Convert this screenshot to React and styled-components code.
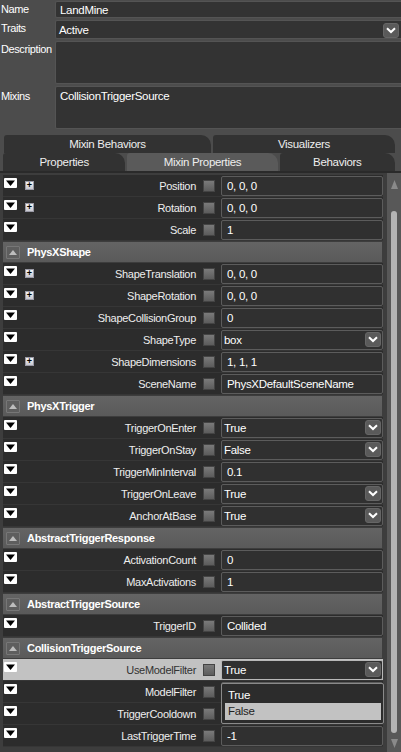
import React from "react";
import styled, { createGlobalStyle } from "styled-components";

const Global = createGlobalStyle`
  html, body {
    margin: 0;
    padding: 0;
    background: #3a3a3a;
  }
  * {
    box-sizing: border-box;
  }
`;

const Screen = styled.div`
  width: 401px;
  height: 752px;
  overflow: hidden;
  background: #4c4c4c;
  font-family: "Liberation Sans", Arial, sans-serif;
  font-size: 11px;
  letter-spacing: -0.3px;
  color: #fff;
  display: flex;
  flex-direction: column;
`;

const Form = styled.div`
  display: grid;
  grid-template-columns: 55px 1fr;
  row-gap: 2px;
  padding-top: 1px;
`;

const FieldLabel = styled.div`
  padding: ${({ pt }) => pt || 2}px 0 0 1px;
  line-height: 13px;
  font-size: 11px;
  letter-spacing: -0.4px;
  white-space: nowrap;
`;

const Field = styled.div`
  height: ${({ h }) => h}px;
  background: #333;
  border: 1px solid #545454;
  border-right: none;
  border-radius: 2px 0 0 2px;
  padding: ${({ pt }) => pt || 3}px 0 0 ${({ pl }) => pl || 4}px;
  display: flex;
  align-items: flex-start;
  justify-content: space-between;
  font-size: 11.5px;
`;

const DropBtn = styled.div`
  width: 16px;
  height: 15px;
  border-radius: 3px;
  background: #5a5a5a;
  border: 1px solid #666;
  display: flex;
  align-items: center;
  justify-content: center;
  margin: ${({ m }) => m || "-1px 2px 0 0"};
  flex: none;
`;

const Tabs = styled.div`
  padding: 6px 4px 0 3px;
  height: 44px;
  border-bottom: 2px solid #2a2a2a;
  display: flex;
  flex-direction: column;
`;

const TabRow = styled.div`
  display: flex;
  height: 18px;
  padding-left: ${({ pl }) => pl || 0}px;
`;

const Tab = styled.div`
  width: ${({ w }) => w}px;
  height: 18px;
  margin-right: 2px;
  background: ${({ active }) => (active ? "#5a5a5a" : "#323232")};
  border-top-right-radius: 10px;
  border-top-left-radius: 3px;
  display: flex;
  align-items: center;
  justify-content: center;
  font-size: 11.5px;
  color: #eee;
`;

const Body = styled.div`
  flex: 1;
  display: flex;
  background: #3d3d3d;
  min-height: 0;
`;

const List = styled.div`
  position: relative;
  flex: 1;
  padding: 2px 0 0 3px;
  width: 386px;
`;

const Row = styled.div`
  height: 22px;
  width: 380px;
  display: flex;
  align-items: center;
  background: ${({ active }) => (active ? "#c2c2c2" : "#2c2c2c")};
  border-bottom: 1px solid #363636;
  color: ${({ active }) => (active ? "#333" : "#eee")};
`;

const Expand = styled.div`
  width: 20px;
  height: 100%;
  padding: 3px 0 0 1px;
  flex: none;
`;

const PlusSlot = styled.div`
  width: 12px;
  flex: none;
  padding: 6px 0 0 2px;
  height: 100%;
`;

const Plus = styled.div`
  width: 9px;
  height: 9px;
  background: linear-gradient(#f4f4f4, #c8c8d0);
  border: 1px solid #9a9aa6;
  color: #000;
  font: bold 9px/7px "Liberation Sans", Arial, sans-serif;
  text-align: center;
  letter-spacing: 0;
`;

const Label = styled.div`
  flex: 1;
  text-align: right;
  white-space: nowrap;
`;

const Check = styled.div`
  width: 12px;
  height: 12px;
  margin-left: 7px;
  flex: none;
  background: linear-gradient(#7a7a7a, #5c5c5c);
  border: 1px solid #444;
`;

const Input = styled.div`
  width: 162px;
  height: 20px;
  margin-left: 6px;
  flex: none;
  background: #303030;
  border: 1px solid ${({ active }) => (active ? "#b8b8b8" : "#5c5c5c")};
  border-radius: 2px;
  color: #fff;
  display: flex;
  align-items: center;
  justify-content: space-between;
  padding-left: ${({ select }) => (select ? 2 : 5)}px;
  font-size: 11.5px;
`;

const Header = styled.div`
  height: 20px;
  width: 379px;
  margin: 1px 0 1px;
  background: linear-gradient(#646464, #5a5a5a);
  display: flex;
  align-items: center;
  padding-left: 3px;
  font-weight: bold;
  color: #fff;
`;

const Collapse = styled.div`
  width: 14px;
  height: 13px;
  margin-right: 7px;
  background: #5e5e5e;
  border: 1px solid #777;
  border-radius: 1px;
  display: flex;
  align-items: center;
  justify-content: center;
`;

const Popup = styled.div`
  position: absolute;
  left: 221px;
  top: 510px;
  width: 163px;
  height: 41px;
  background: #2c2c2c;
  border: 1px solid #8a8a8a;
  border-radius: 2px;
  padding: 4px 2px 0 3px;
  font-size: 11.5px;
`;

const Option = styled.div`
  height: ${({ hi }) => (hi ? 17 : 15)}px;
  line-height: ${({ hi }) => (hi ? 17 : 15)}px;
  padding-left: 3px;
  background: ${({ hi }) => (hi ? "#c2c2c2" : "transparent")};
  color: ${({ hi }) => (hi ? "#222" : "#fff")};
`;

const Scroll = styled.div`
  width: 14px;
  background: #585858;
  display: flex;
  flex-direction: column;
  align-items: center;
  padding-top: 7px;
`;

const Thumb = styled.div`
  width: 6px;
  height: 522px;
  margin-top: 22px;
  border-radius: 3px;
  background: #b4b4b4;
`;

const Spacer = styled.div`
  flex: 1;
`;

const BottomArrow = styled.div`
  padding-bottom: 2px;
`;

const Chevron = () => (
  <svg width="10" height="7" viewBox="0 0 10 7">
    <path d="M1 1.2 L5 5 L9 1.2" stroke="#fff" strokeWidth="2" fill="none" />
  </svg>
);

const DownIcon = () => (
  <svg width="13" height="10" viewBox="0 0 13 10">
    <rect x="0" y="0" width="13" height="10" rx="1" fill="#fff" />
    <path d="M2 2.5 H11 L6.5 8 Z" fill="#000" />
  </svg>
);

const UpIcon = () => (
  <svg width="8" height="5" viewBox="0 0 8 5">
    <path d="M0 5 L4 0 L8 5 Z" fill="#bdbdbd" />
  </svg>
);

const Arrow = ({ down }) => (
  <svg width="7" height="9" viewBox="0 0 7 9">
    <path d={down ? "M0 0 H7 L3.5 9 Z" : "M0 9 H7 L3.5 0 Z"} fill="#8a8a8a" />
  </svg>
);

const rows = [
  { label: "Position", plus: true, value: "0, 0, 0" },
  { label: "Rotation", plus: true, value: "0, 0, 0" },
  { label: "Scale", value: "1" },
  { header: "PhysXShape" },
  { label: "ShapeTranslation", plus: true, value: "0, 0, 0" },
  { label: "ShapeRotation", plus: true, value: "0, 0, 0" },
  { label: "ShapeCollisionGroup", value: "0" },
  { label: "ShapeType", value: "box", select: true },
  { label: "ShapeDimensions", plus: true, value: "1, 1, 1" },
  { label: "SceneName", value: "PhysXDefaultSceneName" },
  { header: "PhysXTrigger" },
  { label: "TriggerOnEnter", value: "True", select: true },
  { label: "TriggerOnStay", value: "False", select: true },
  { label: "TriggerMinInterval", value: "0.1" },
  { label: "TriggerOnLeave", value: "True", select: true },
  { label: "AnchorAtBase", value: "True", select: true },
  { header: "AbstractTriggerResponse" },
  { label: "ActivationCount", value: "0" },
  { label: "MaxActivations", value: "1" },
  { header: "AbstractTriggerSource" },
  { label: "TriggerID", value: "Collided" },
  { header: "CollisionTriggerSource" },
  { label: "UseModelFilter", value: "True", select: true, active: true },
  { label: "ModelFilter", value: "" },
  { label: "TriggerCooldown", value: "" },
  { label: "LastTriggerTime", value: "-1" },
];

export default function App() {
  return (
    <Screen>
      <Global />
      <Form>
        <FieldLabel>Name</FieldLabel>
        <Field h={17} pt={2}>
          LandMine
        </Field>
        <FieldLabel>Traits</FieldLabel>
        <Field h={19} pl={3}>
          Active
          <DropBtn>
            <Chevron />
          </DropBtn>
        </Field>
        <FieldLabel>Description</FieldLabel>
        <Field h={43} />
        <FieldLabel pt={4}>Mixins</FieldLabel>
        <Field h={43}>CollisionTriggerSource</Field>
      </Form>

      <Tabs>
        <TabRow pl={1}>
          <Tab w={208}>Mixin Behaviors</Tab>
          <Tab w={183}>Visualizers</Tab>
        </TabRow>
        <TabRow>
          <Tab w={123}>Properties</Tab>
          <Tab w={151} active>
            Mixin Properties
          </Tab>
          <Tab w={116}>Behaviors</Tab>
        </TabRow>
      </Tabs>

      <Body>
        <List>
          {rows.map((r, i) =>
            r.header ? (
              <Header key={i}>
                <Collapse>
                  <UpIcon />
                </Collapse>
                {r.header}
              </Header>
            ) : (
              <Row key={i} active={r.active}>
                <Expand>
                  <DownIcon />
                </Expand>
                <PlusSlot>{r.plus && <Plus>+</Plus>}</PlusSlot>
                <Label>{r.label}</Label>
                <Check />
                <Input select={r.select} active={r.active}>
                  {r.value}
                  {r.select && (
                    <DropBtn m="0 1px 0 0">
                      <Chevron />
                    </DropBtn>
                  )}
                </Input>
              </Row>
            )
          )}
          <Popup>
            <Option>True</Option>
            <Option hi>False</Option>
          </Popup>
        </List>
        <Scroll>
          <Arrow />
          <Thumb />
          <Spacer />
          <BottomArrow>
            <Arrow down />
          </BottomArrow>
        </Scroll>
      </Body>
    </Screen>
  );
}
